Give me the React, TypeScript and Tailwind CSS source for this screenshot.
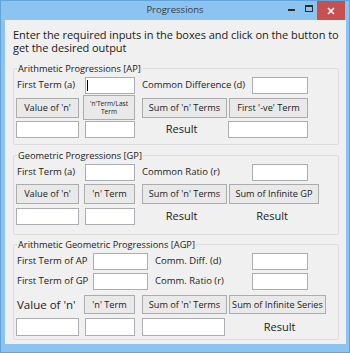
import type { ReactNode } from "react";

function TextBox({ w, cursor }: { w: string; cursor?: boolean }) {
  return (
    <div className={`${w} h-full border border-[#abadb3] bg-white flex items-center`}>
      {cursor && <div className="ml-[1px] w-px h-[11px] bg-black" />}
    </div>
  );
}

function Btn({ w, h = "h-[20px]", ml = "", children, small }: { w: string; h?: string; ml?: string; children: ReactNode; small?: boolean }) {
  return (
    <div
      className={`${w} ${h} ${ml} shrink-0 flex items-center justify-center text-center border border-[#acacac] bg-[#e9e9e9] text-[#1a1a1a] ${
        small ? "text-[6.6px] leading-[8px]" : "text-[9.2px]"
      }`}
    >
      {children}
    </div>
  );
}

function Group({ title, h, mt, children }: { title: string; h: string; mt: string; children: ReactNode }) {
  return (
    <div className={`relative ml-[8px] w-[326px] ${h} ${mt} border border-[#dcdcdc] rounded-[2px] flex flex-col`}>
      <span className="absolute left-[3px] -top-[7px] px-[1px] bg-[#f0f0f0] text-[9.25px] leading-[13px] text-[#1a1a1a]">
        {title}
      </span>
      {children}
    </div>
  );
}

export default function App() {
  return (
    <div className="w-[350px] h-[353px] bg-[#8cc4f1] border border-[#62a3dc] flex flex-col font-['Open_Sans',sans-serif]">
      {/* Title bar */}
      <div className="h-[19px] flex items-stretch">
        <div className="flex-1" />
        <div className="flex items-center text-[9.5px] text-[#3a3a3a]">Progressions</div>
        <div className="flex-1 flex justify-end items-start">
          <div className="mt-[8px] w-[7px] h-[2px] bg-[#2b2b2b]" />
          <div className="ml-[10px] mt-[4px] w-[8px] h-[7px] border border-[#2b2b2b] border-t-2" />
          <div className="ml-[4px] mr-[4px] w-[28px] h-[19px] bg-[#c75050] flex items-center justify-center">
            <svg width="8" height="8" viewBox="0 0 8 8">
              <path d="M1 1 L7 7 M7 1 L1 7" stroke="white" strokeWidth="1.6" />
            </svg>
          </div>
        </div>
      </div>

      {/* Client area */}
      <div className="ml-[4px] w-[341px] h-[324px] bg-[#f0f0f0] flex flex-col text-[#1a1a1a]">
        <p className="pl-[8px] pr-[4px] pt-[8px] text-[11px] leading-[13px] tracking-[-0.05px]">
          Enter the required inputs in the boxes and click on the button to get the desired output
        </p>

        <Group title="Arithmetic Progressions [AP]" h="h-[77px]" mt="mt-[14px]">
          <div className="mt-[8px] h-[17px] flex items-center text-[9.5px]">
            <span className="ml-[3px] w-[68px]">First Term (a)</span>
            <TextBox w="w-[50px]" cursor />
            <span className="ml-[7px] w-[110px]">Common Difference (d)</span>
            <TextBox w="w-[56px]" />
          </div>
          <div className="mt-[1px] h-[25px] flex items-center">
            <Btn w="w-[63px]" ml="ml-[2px]">Value of 'n'</Btn>
            <Btn w="w-[52px]" h="h-[25px]" ml="ml-[4px]" small>
              'n'Term/Last
              <br />
              Term
            </Btn>
            <Btn w="w-[85px]" ml="ml-[7px]">Sum of 'n' Terms</Btn>
            <Btn w="w-[79px]" ml="ml-[2px]">First '-ve' Term</Btn>
          </div>
          <div className="mt-[1px] h-[17px] flex items-center">
            <div className="ml-[2px] h-full"><TextBox w="w-[63px]" /></div>
            <div className="ml-[6px] h-full"><TextBox w="w-[50px]" /></div>
            <span className="w-[93px] text-center text-[11px]">Result</span>
            <TextBox w="w-[80px]" />
          </div>
        </Group>

        <Group title="Geometric Progressions [GP]" h="h-[80px]" mt="mt-[10px]">
          <div className="mt-[8px] h-[17px] flex items-center text-[9.5px]">
            <span className="ml-[3px] w-[68px]">First Term (a)</span>
            <TextBox w="w-[50px]" />
            <span className="ml-[7px] w-[110px]">Common Ratio (r)</span>
            <TextBox w="w-[56px]" />
          </div>
          <div className="mt-[3px] h-[20px] flex items-center">
            <Btn w="w-[63px]" ml="ml-[2px]">Value of 'n'</Btn>
            <Btn w="w-[51px]" ml="ml-[5px]">'n' Term</Btn>
            <Btn w="w-[85px]" ml="ml-[7px]">Sum of 'n' Terms</Btn>
            <Btn w="w-[90px]" ml="ml-[2px]">Sum of Infinite GP</Btn>
          </div>
          <div className="mt-[4px] h-[17px] flex items-center">
            <div className="ml-[2px] h-full"><TextBox w="w-[63px]" /></div>
            <div className="ml-[6px] h-full"><TextBox w="w-[50px]" /></div>
            <span className="w-[93px] text-center text-[11px]">Result</span>
            <span className="w-[88px] text-center text-[11px]">Result</span>
          </div>
        </Group>

        <Group title="Arithmetic Geometric Progressions [AGP]" h="h-[96px]" mt="mt-[9px]">
          <div className="mt-[8px] h-[17px] flex items-center text-[9.5px]">
            <span className="ml-[3px] w-[76px]">First Term of AP</span>
            <TextBox w="w-[55px]" />
            <span className="ml-[7px] w-[97px]">Comm. Diff. (d)</span>
            <TextBox w="w-[56px]" />
          </div>
          <div className="mt-[3px] h-[17px] flex items-center text-[9.5px]">
            <span className="ml-[3px] w-[76px]">First Term of GP</span>
            <TextBox w="w-[55px]" />
            <span className="ml-[7px] w-[97px]">Comm. Ratio (r)</span>
            <TextBox w="w-[56px]" />
          </div>
          <div className="mt-[5px] h-[19px] flex items-center">
            <span className="ml-[3px] w-[67px] text-[11.5px]">Value of 'n'</span>
            <Btn w="w-[51px]" h="h-[19px]">'n' Term</Btn>
            <Btn w="w-[85px]" h="h-[19px]" ml="ml-[7px]">Sum of 'n' Terms</Btn>
            <Btn w="w-[97px]" h="h-[19px]" ml="ml-[2px]">Sum of Infinite Series</Btn>
          </div>
          <div className="mt-[4px] h-[18px] flex items-center">
            <div className="ml-[2px] h-full"><TextBox w="w-[63px]" /></div>
            <div className="ml-[6px] h-full"><TextBox w="w-[50px]" /></div>
            <div className="ml-[7px] h-full"><TextBox w="w-[83px]" /></div>
            <span className="w-[109px] text-center text-[11px]">Result</span>
          </div>
        </Group>
      </div>
    </div>
  );
}
